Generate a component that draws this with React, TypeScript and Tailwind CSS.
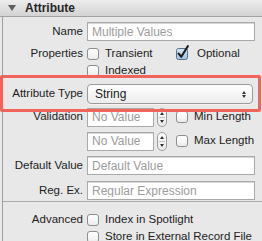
import React from "react";

const font = { fontFamily: '"Liberation Sans", Arial, sans-serif' };

function Box({ checked = false }: { checked?: boolean }) {
  if (checked) {
    return (
      <svg width="15" height="15" viewBox="0 0 15 15" className="shrink-0 -mt-[3px]">
        <defs>
          <linearGradient id="cb" x1="0" y1="0" x2="0" y2="1">
            <stop offset="0" stopColor="#d6e6f7" />
            <stop offset="1" stopColor="#9fc0e6" />
          </linearGradient>
        </defs>
        <rect x="0.5" y="3.5" width="11" height="11" rx="2" fill="url(#cb)" stroke="#5a6f8a" />
        <path d="M2.6 8.6 L5.3 11.8 L11.8 1.2" fill="none" stroke="#1b1b1b" strokeWidth="2.1" strokeLinecap="round" strokeLinejoin="round" />
      </svg>
    );
  }
  return (
    <span className="block w-[12px] h-[12px] shrink-0 rounded-[3px] border border-[#8e8e8e] bg-gradient-to-b from-white to-[#ececec] shadow-[inset_0_1px_0_#fff]" />
  );
}

function Check({ label, checked = false, w }: { label: string; checked?: boolean; w?: string }) {
  return (
    <div className={`flex items-center gap-[6px] ${w ?? ""}`}>
      <Box checked={checked} />
      <span className="text-[11.5px] text-[#1c1c1c] leading-none">{label}</span>
    </div>
  );
}

function Field({ placeholder, w = "w-[168px]", h = "h-[19px]" }: { placeholder: string; w?: string; h?: string }) {
  return (
    <div className={`${w} ${h} bg-white border border-[#a9a9a9] shadow-[inset_0_1px_0_#d6d6d6] flex items-center px-[4px]`}>
      <span className="text-[12px] text-[#9c9c9c] leading-none truncate">{placeholder}</span>
    </div>
  );
}

function Stepper() {
  return (
    <div className="w-[10px] h-[19px] ml-[3px] rounded-[5px] border border-[#9a9a9a] bg-gradient-to-b from-white to-[#e9e9e9] flex flex-col items-center justify-center gap-[2px]">
      <span className="block w-0 h-0 border-l-[2px] border-r-[2px] border-b-[3px] border-l-transparent border-r-transparent border-b-[#333]" />
      <span className="block w-[6px] h-px bg-[#bcbcbc]" />
      <span className="block w-0 h-0 border-l-[2px] border-r-[2px] border-t-[3px] border-l-transparent border-r-transparent border-t-[#333]" />
    </div>
  );
}

function Row({ label, h, children }: { label?: string; h: string; children: React.ReactNode }) {
  return (
    <div className={`flex items-center ${h}`}>
      <div className="w-[81px] pr-[1px] text-right text-[11.5px] text-[#1c1c1c] leading-none shrink-0">{label}</div>
      <div className="flex items-center pl-[3px]">{children}</div>
    </div>
  );
}

export default function App() {
  return (
    <div className="relative w-[262px] h-[241px] overflow-hidden bg-[#e8e8e8]" style={font}>
      {/* Header */}
      <div className="h-[17px] flex items-center border-b border-[#a3a3a3] bg-gradient-to-b from-[#ececec] to-[#d3d3d3]">
        <span className="ml-[8px] w-0 h-0 border-l-[4px] border-r-[4px] border-t-[6px] border-l-transparent border-r-transparent border-t-[#5e5e5e]" />
        <span className="ml-[9px] text-[12px] font-bold text-[#262626] leading-none">Attribute</span>
      </div>

      {/* Body */}
      <div className="ml-[2px] border-l border-[#9f9f9f] h-[224px] flex flex-col">
        <div className="pt-[5px]">
          <Row label="Name" h="h-[19px]">
            <Field placeholder="Multiple Values" />
          </Row>
          <div className="h-[6px]" />
          <Row label="Properties" h="h-[14px]">
            <Check label="Transient" w="w-[89px]" />
            <Check label="Optional" checked />
          </Row>
          <div className="h-[3px]" />
          <Row h="h-[14px]">
            <Check label="Indexed" />
          </Row>
          <div className="h-[6px]" />
          <Row label="Attribute Type" h="h-[20px]">
            <div className="w-[166px] h-[20px] rounded-[4px] border border-[#9b9b9b] bg-gradient-to-b from-white to-[#ececec] shadow-[0_1px_0_#f4f4f4] flex items-center justify-between pl-[7px] pr-[6px]">
              <span className="text-[12px] text-[#1a1a1a] leading-none">String</span>
              <span className="flex flex-col items-center gap-[1px]">
                <span className="block w-0 h-0 border-l-[2.5px] border-r-[2.5px] border-b-[3px] border-l-transparent border-r-transparent border-b-[#333]" />
                <span className="block w-0 h-0 border-l-[2.5px] border-r-[2.5px] border-t-[3px] border-l-transparent border-r-transparent border-t-[#333]" />
              </span>
            </div>
          </Row>
          <div className="h-[3px]" />
          <Row label="Validation" h="h-[20px]">
            <Field placeholder="No Value" w="w-[67px]" />
            <Stepper />
            <div className="ml-[9px]">
              <Check label="Min Length" />
            </div>
          </Row>
          <div className="h-[4px]" />
          <Row h="h-[20px]">
            <div className="flex items-center">
              <Field placeholder="No Value" w="w-[67px]" />
              <Stepper />
              <div className="ml-[9px]">
                <Check label="Max Length" />
              </div>
            </div>
          </Row>
          <div className="h-[5px]" />
          <Row label="Default Value" h="h-[19px]">
            <Field placeholder="Default Value" />
          </Row>
          <div className="h-[6px]" />
          <Row label="Reg. Ex." h="h-[19px]">
            <Field placeholder="Regular Expression" />
          </Row>
        </div>
        <div className="mt-[1px] border-t border-[#a9a9a9]" />
        <div className="pt-[11px]">
          <Row label="Advanced" h="h-[14px]">
            <Check label="Index in Spotlight" />
          </Row>
          <div className="h-[3px]" />
          <Row h="h-[14px]">
            <Check label="Store in External Record File" />
          </Row>
        </div>
      </div>

      {/* Highlight annotation */}
      <div className="absolute left-0 top-[75px] w-[261px] h-[37px] border-[3px] border-[#f0645c] rounded-[2px] pointer-events-none" />
    </div>
  );
}
